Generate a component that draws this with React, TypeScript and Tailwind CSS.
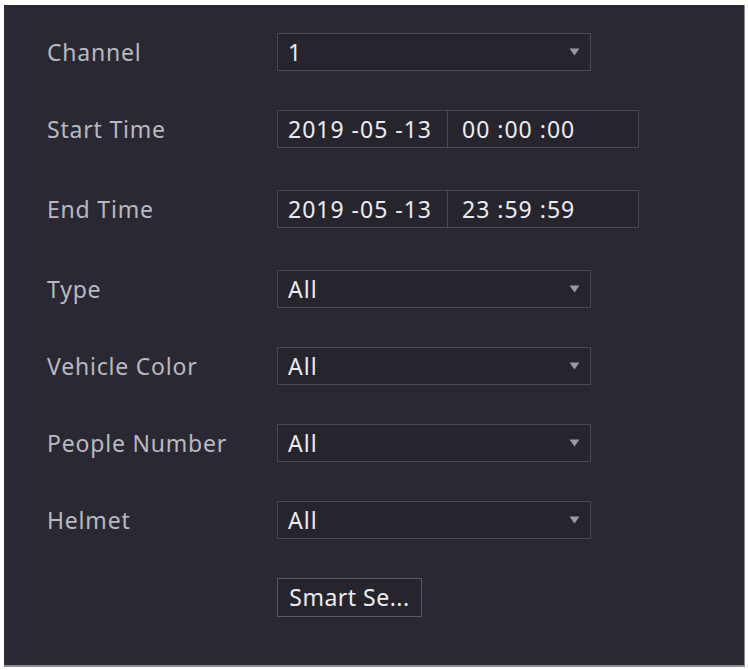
import React from "react";

const font = { fontFamily: '"Noto Sans", "Open Sans", sans-serif' };

const Caret = () => (
  <svg width="11" height="8" viewBox="0 0 11 8" className="shrink-0">
    <path d="M0.5 0.5 L10.5 0.5 L5.5 7.5 Z" fill="#9a9aa4" />
  </svg>
);

const Select = ({ value }: { value: string }) => (
  <div className="flex h-[38px] w-[314px] items-center justify-between border border-[#4a4a55] bg-[#26252d] pl-[10px] pr-[10px]">
    <span className="text-[23px] leading-none tracking-[1px] text-[#ececf0]">{value}</span>
    <Caret />
  </div>
);

const DateTime = ({ date, time }: { date: string; time: string }) => (
  <div className="flex h-[38px] w-[362px] border border-[#4a4a55] bg-[#26252d] text-[23px] leading-none tracking-[1px] text-[#ececf0]">
    <div className="flex w-[170px] items-center border-r border-[#4a4a55] pl-[10px]">{date}</div>
    <div className="flex flex-1 items-center pl-[14px]">{time}</div>
  </div>
);

const Row = ({ label, className, children }: { label: string; className?: string; children: React.ReactNode }) => (
  <div className={`flex h-[38px] items-center ${className ?? ""}`}>
    <div className="w-[230px] text-[23px] leading-none tracking-[0.8px] text-[#b9b9c0]">{label}</div>
    {children}
  </div>
);

export default function App() {
  return (
    <div className="min-h-[670px] bg-white pl-[4px] pr-[3px] pt-[5px]" style={font}>
      <div className="h-[662px] border-b-2 border-r border-[#8a8a90] bg-[#2a2933] pl-[43px] pt-[28px]">
        <Row label="Channel">
          <Select value="1" />
        </Row>
        <Row label="Start Time" className="mt-[39px]">
          <DateTime date="2019 -05 -13" time="00 :00 :00" />
        </Row>
        <Row label="End Time" className="mt-[42px]">
          <DateTime date="2019 -05 -13" time="23 :59 :59" />
        </Row>
        <Row label="Type" className="mt-[42px]">
          <Select value="All" />
        </Row>
        <Row label="Vehicle Color" className="mt-[39px]">
          <Select value="All" />
        </Row>
        <Row label="People Number" className="mt-[39px]">
          <Select value="All" />
        </Row>
        <Row label="Helmet" className="mt-[39px]">
          <Select value="All" />
        </Row>
        <div className="mt-[39px] flex pl-[230px]">
          <button className="flex h-[39px] w-[145px] items-center justify-center border border-[#5a5a66] bg-[#26252d] text-[23px] leading-none tracking-[0.5px] text-[#ececf0]">
            Smart Se...
          </button>
        </div>
      </div>
    </div>
  );
}
